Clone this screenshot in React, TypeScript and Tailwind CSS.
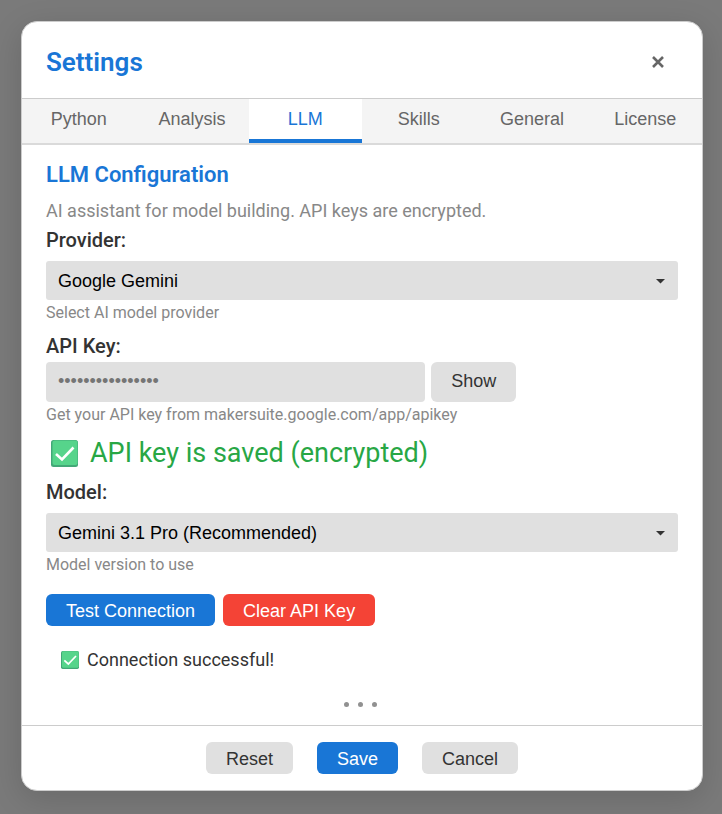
import { useState, type ReactNode } from "react";
import clsx from "clsx";

const TABS = ["Python", "Analysis", "LLM", "Skills", "General", "License"];

const PROVIDERS = ["Google Gemini", "OpenAI", "Anthropic"];
const MODELS = ["Gemini 3.1 Pro (Recommended)", "Gemini 3.1 Flash"];

const BUTTON_TONE = {
  neutral: "bg-[#e0e0e0] text-[#333]",
  primary: "bg-[#1976d6] text-white",
  danger: "bg-[#f44336] text-white",
};

export default function App() {
  const [tab, setTab] = useState("LLM");
  const [showKey, setShowKey] = useState(false);

  return (
    <div className="flex min-h-screen flex-col bg-[#7a7a7a] pt-[21px] pr-[19px] pb-[23px] pl-[21px] font-[Roboto,sans-serif] text-[#333]">
      <div
        role="dialog"
        aria-labelledby="settings-title"
        className="flex flex-1 flex-col overflow-hidden rounded-2xl border border-[#ccc] bg-white shadow-[0_8px_32px_rgba(0,0,0,0.14)]"
      >
        <header className="flex h-[77px] items-center justify-between border-b border-[#ccc] px-6 pt-1">
          <h1 id="settings-title" className="text-[26px] leading-8 font-semibold text-[#1976d6]">
            Settings
          </h1>
          <button type="button" aria-label="Close" className="flex h-10 w-10 items-center justify-center text-[#666]">
            <svg width="12" height="12" viewBox="0 0 12 12" fill="none" stroke="currentColor" strokeWidth="2.6" aria-hidden>
              <path d="M1 1l10 10M11 1L1 11" />
            </svg>
          </button>
        </header>

        <nav role="tablist" className="grid grid-cols-6 border-b-2 border-[#dadada] bg-[#f4f4f4] font-[Liberation_Sans,Arial,sans-serif] text-lg">
          {TABS.map((name) => (
            <button
              key={name}
              type="button"
              role="tab"
              aria-selected={tab === name}
              onClick={() => setTab(name)}
              className={clsx(
                "h-11 border-b-4 leading-6",
                tab === name ? "border-[#1976d6] bg-white text-[#1976d6]" : "border-transparent text-[#666]",
              )}
            >
              {name}
            </button>
          ))}
        </nav>

        <main className="flex flex-1 flex-col px-6 pt-4">
          <h2 className="text-[22px] leading-7 font-semibold text-[#1976d6]">LLM Configuration</h2>
          <p className="mt-2.5 text-lg leading-6 text-[#888]">AI assistant for model building. API keys are encrypted.</p>

          <Label htmlFor="provider" className="mt-[3px]">Provider:</Label>
          <Select id="provider" options={PROVIDERS} />
          <Hint>Select AI model provider</Hint>

          <Label htmlFor="api-key" className="mt-2">API Key:</Label>
          <div className="mt-0.5 flex gap-1.5">
            <input
              id="api-key"
              type={showKey ? "text" : "password"}
              placeholder="••••••••••••••••"
              className="h-10 w-3/5 rounded bg-[#e0e0e0] px-3 pb-0.5 font-[Liberation_Sans,Arial,sans-serif] text-lg outline-none placeholder:text-[#757575]"
            />
            <Button tone="neutral" className="h-10 pb-0.5" onClick={() => setShowKey(!showKey)}>
              {showKey ? "Hide" : "Show"}
            </Button>
          </div>
          <Hint>Get your API key from makersuite.google.com/app/apikey</Hint>

          <p className="mt-[9px] flex items-center gap-3 pl-[5px] text-[27px] leading-9 text-[#28a745]">
            <CheckMark size={27} />
            API key is saved (encrypted)
          </p>

          <Label htmlFor="model" className="mt-[7px]">Model:</Label>
          <Select id="model" options={MODELS} />
          <Hint>Model version to use</Hint>

          <div className="mt-[18px] flex gap-2">
            <Button tone="primary">Test Connection</Button>
            <Button tone="danger">Clear API Key</Button>
          </div>

          <p role="status" className="mt-[22px] flex items-center gap-2 pl-[15px] text-lg leading-6">
            <CheckMark size={18} />
            Connection successful!
          </p>

          <div className="mt-auto flex justify-center gap-[9px] pr-1 pb-[18px]" aria-hidden>
            <span className="h-[5px] w-[5px] rounded-full bg-[#919191]" />
            <span className="h-[5px] w-[5px] rounded-full bg-[#919191]" />
            <span className="h-[5px] w-[5px] rounded-full bg-[#919191]" />
          </div>
        </main>

        <footer className="flex justify-center gap-6 border-t border-[#ccc] py-4">
          <Button tone="neutral">Reset</Button>
          <Button tone="primary">Save</Button>
          <Button tone="neutral">Cancel</Button>
        </footer>
      </div>
    </div>
  );
}

function Label({ htmlFor, className, children }: { htmlFor: string; className?: string; children: ReactNode }) {
  return (
    <label htmlFor={htmlFor} className={clsx("self-start text-xl leading-7 font-medium", className)}>
      {children}
    </label>
  );
}

function Hint({ children }: { children: ReactNode }) {
  return <p className="mt-0.5 text-base leading-[22px] text-[#888]">{children}</p>;
}

function Select({ id, options }: { id: string; options: string[] }) {
  return (
    <div className="relative mt-[7px]">
      <select
        id={id}
        className="block h-[39px] w-full appearance-none rounded-[3px] bg-[#e0e0e0] pr-9 pl-3 font-[Liberation_Sans,Arial,sans-serif] text-lg text-black outline-none"
      >
        {options.map((o) => <option key={o}>{o}</option>)}
      </select>
      <svg width="9" height="5" viewBox="0 0 9 5" className="pointer-events-none absolute top-[18px] right-[13px] fill-[#333]" aria-hidden>
        <path d="M0 0h9L4.5 4.5z" />
      </svg>
    </div>
  );
}

function Button({ tone, className, onClick, children }: { tone: keyof typeof BUTTON_TONE; className?: string; onClick?: () => void; children: ReactNode }) {
  return (
    <button
      type="button"
      onClick={onClick}
      className={clsx(
        "rounded-md px-5 font-[Liberation_Sans,Arial,sans-serif] text-lg leading-6",
        BUTTON_TONE[tone],
        className ?? "h-8 pt-0.5",
      )}
    >
      {children}
    </button>
  );
}

// Green tile with a white tick, shaded along the left and bottom edges.
function CheckMark({ size }: { size: number }) {
  return (
    <svg width={size} height={size} viewBox="0 0 27 27" className="shrink-0" aria-hidden>
      <rect width="27" height="27" rx="2.5" fill="#42a877" />
      <rect x="1.5" y="0.5" width="25" height="24.5" rx="2" fill="#56d48b" />
      <path d="M5 14l6 5.5L22.5 7.5" fill="none" stroke="#fff" strokeWidth="2.6" />
    </svg>
  );
}
